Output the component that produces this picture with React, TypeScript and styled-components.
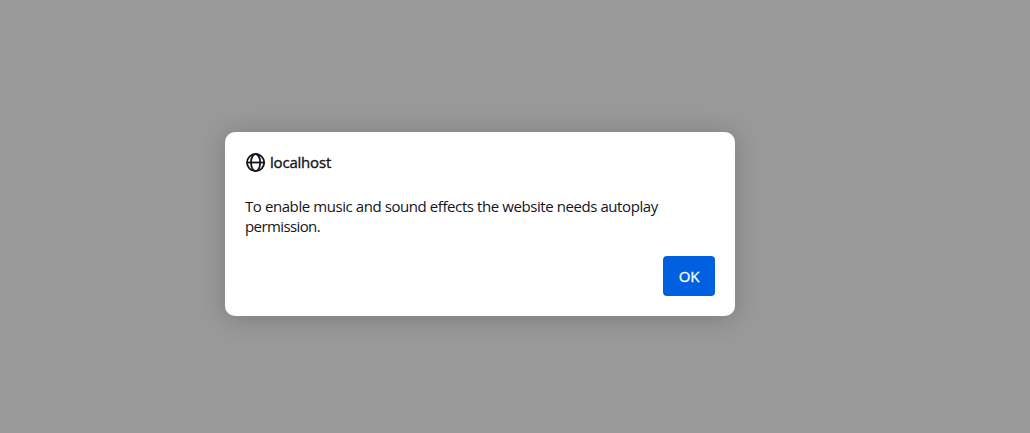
import React from "react";
import styled, { createGlobalStyle } from "styled-components";

const Global = createGlobalStyle`
  body { margin: 0; background: #99999a; font-family: "Noto Sans", "Open Sans", sans-serif; }
`;
const Backdrop = styled.main`
  box-sizing: border-box;
  height: 433px;
  padding: 132px 0 0 225px;
  background: #99999a;
  overflow: hidden;
`;
const Dialog = styled.section`
  box-sizing: border-box;
  width: 510px;
  height: 184px;
  padding: 20px;
  display: flex;
  flex-direction: column;
  background: #fff;
  border-radius: 10px;
  box-shadow: 0 2px 24px rgba(0, 0, 0, 0.2);
  color: #15141a;
`;
const Header = styled.header`
  display: flex;
  align-items: flex-start;
  gap: 4px;
  height: 21px;
`;
const Title = styled.span`
  font-family: "Open Sans", sans-serif;
  font-size: 15px;
  line-height: 20px;
  letter-spacing: -0.2px;
  -webkit-text-stroke: 0.35px currentColor;
  white-space: nowrap;
`;
const Message = styled.p`
  margin: 23px 0 0;
  font-family: "Open Sans", sans-serif;
  font-size: 15px;
  line-height: 20px;
`;
const Line = styled.span<{ $spacing: number }>`
  display: block;
  white-space: nowrap;
  letter-spacing: ${(p) => p.$spacing}px;
`;
const Actions = styled.footer`
  display: flex;
  justify-content: flex-end;
  margin-top: auto;
`;
const Button = styled.button`
  width: 52px;
  height: 40px;
  padding: 0;
  border: 0;
  border-radius: 4px;
  background: #0060df;
  color: #fff;
  font: 400 15px/20px "Open Sans", sans-serif;
  letter-spacing: -0.3px;
  -webkit-text-stroke: 0.3px currentColor;
`;

export default function App() {
  return (
    <Backdrop>
      <Global />
      <Dialog role="alertdialog">
        <Header>
          <svg width="21" height="21" viewBox="0 0 21 21" fill="none" stroke="#15141a" strokeWidth="1.8">
            <circle cx="10.6" cy="10.6" r="8.6" />
            <ellipse cx="10.6" cy="10.6" rx="4.6" ry="8.6" />
            <path d="M2 10.5h17.2" />
          </svg>
          <Title>localhost</Title>
        </Header>
        <Message>
          <Line $spacing={-0.42}>To enable music and sound effects the website needs autoplay</Line>
          <Line $spacing={-0.6}>permission.</Line>
        </Message>
        <Actions>
          <Button>OK</Button>
        </Actions>
      </Dialog>
    </Backdrop>
  );
}
